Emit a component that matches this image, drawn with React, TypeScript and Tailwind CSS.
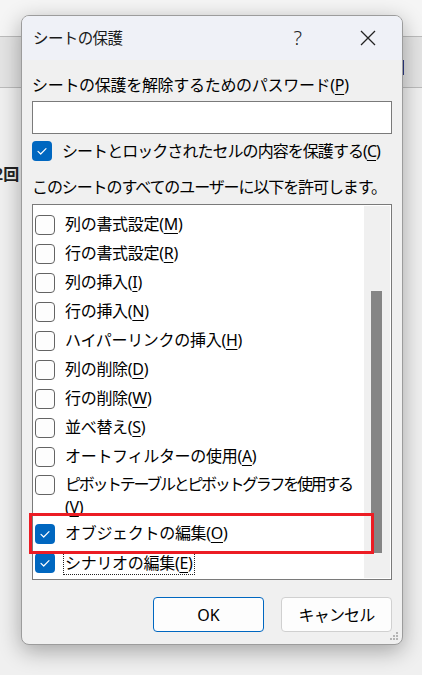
import React from "react";

type Item = { label: string; key: string; checked: boolean; wrap?: boolean; focus?: boolean };

const items: Item[] = [
  { label: "列の書式設定", key: "M", checked: false },
  { label: "行の書式設定", key: "R", checked: false },
  { label: "列の挿入", key: "I", checked: false },
  { label: "行の挿入", key: "N", checked: false },
  { label: "ハイパーリンクの挿入", key: "H", checked: false },
  { label: "列の削除", key: "D", checked: false },
  { label: "行の削除", key: "W", checked: false },
  { label: "並べ替え", key: "S", checked: false },
  { label: "オートフィルターの使用", key: "A", checked: false },
  { label: "ピボットテーブルとピボットグラフを使用する", key: "V", checked: false, wrap: true },
  { label: "オブジェクトの編集", key: "O", checked: true },
  { label: "シナリオの編集", key: "E", checked: true, focus: true },
];

const CheckBox = ({ checked }: { checked: boolean }) =>
  checked ? (
    <div className="w-[20px] h-[20px] shrink-0 rounded-[4px] bg-[#0067c0] flex items-center justify-center">
      <svg width="20" height="20" viewBox="0 0 20 20" fill="none">
        <path d="M6 10.3 L8.7 13 L14 7.6" stroke="white" strokeWidth="1.2" strokeLinecap="round" strokeLinejoin="round" />
      </svg>
    </div>
  ) : (
    <div className="w-[20px] h-[20px] shrink-0 rounded-[4px] border border-[#646464] bg-[#fdfdfd]" />
  );

const Key = ({ k }: { k: string }) => (
  <>
    (<span className="underline underline-offset-[3px] decoration-1">{k}</span>)
  </>
);

export default function App() {
  return (
    <div className="relative w-[422px] h-[675px] overflow-hidden bg-[#f0f0f0] font-['Noto_Sans','Noto_Sans_CJK_JP',sans-serif] text-black">
      {/* sheet behind the dialog */}
      <div className="h-[36px] bg-[#f5f5f5]" />
      <div className="h-[52px] bg-[#e4e4e4] border-y border-[#bcbcbc]" />
      <div className="pt-[75px]">
        <div className="ml-[-6px] text-[16px] leading-[22px] font-semibold text-[#222] whitespace-nowrap">2回</div>
      </div>
      <div className="absolute left-[402px] top-[60px] w-[2px] h-[15px] bg-[#2f3c86]" />

      {/* dialog */}
      <div className="absolute left-[21px] top-[15px] w-[382px] h-[630px] rounded-[8px] border border-[#9c9c9c] bg-[#f0f0f0] shadow-[0_6px_22px_rgba(0,0,0,0.32)] flex flex-col overflow-hidden">
        <div className="h-[44px] shrink-0 bg-[#eff1f7] flex items-center pl-[11px] pr-[26px]">
          <span className="text-[15.5px] text-[#1b1b1b] tracking-[-0.6px] mt-[1px]">シートの保護</span>
          <span className="ml-auto mr-[58px] text-[20px] font-light text-[#222] leading-none">?</span>
          <svg width="16" height="16" viewBox="0 0 16 16">
            <path d="M1 1 L15 15 M15 1 L1 15" stroke="#222" strokeWidth="1.3" />
          </svg>
        </div>

        <div className="flex-1 px-[10px] flex flex-col">
          <div className="mt-[13px] text-[16px] leading-[24px] tracking-[-0.3px] whitespace-nowrap">
            シートの保護を解除するためのパスワード<Key k="P" />
          </div>
          <div className="mt-[4px] h-[33px] w-[360px] bg-white border border-[#7a7a7a]" />

          <div className="mt-[5px] h-[24px] flex items-center">
            <CheckBox checked />
            <span className="ml-[10px] text-[16px] leading-[24px] tracking-[-0.95px] whitespace-nowrap">
              シートとロックされたセルの内容を保護する<Key k="C" />
            </span>
          </div>

          <div className="mt-[12px] text-[16px] leading-[24px] tracking-[-1.1px] whitespace-nowrap">
            このシートのすべてのユーザーに以下を許可します。
          </div>

          <div className="relative mt-[5px] h-[376px] w-[360px] bg-white border border-[#7a7a7a] flex">
            <div className="flex-1 pt-[5px] pl-[2px]">
              {items.map((it) =>
                it.wrap ? (
                  <div key={it.key} className="h-[48px] flex items-start pt-[2px]">
                    <div className="h-[23px] flex items-center">
                      <CheckBox checked={it.checked} />
                    </div>
                    <span className="ml-[10px] text-[16px] leading-[23px] whitespace-nowrap">
                      <span className="tracking-[-2.3px]">{it.label}</span>
                      <br />
                      <span className="tracking-[-0.3px]">
                        <Key k={it.key} />
                      </span>
                    </span>
                  </div>
                ) : (
                  <div key={it.key} className="h-[29px] flex items-center">
                    <CheckBox checked={it.checked} />
                    <span
                      className={
                        it.focus
                          ? "ml-[8px] px-[1px] border border-dotted border-[#222] text-[16px] leading-[22px] tracking-[-0.3px] whitespace-nowrap"
                          : "ml-[10px] text-[16px] leading-[23px] tracking-[-0.3px] whitespace-nowrap"
                      }
                    >
                      {it.label}
                      <Key k={it.key} />
                    </span>
                  </div>
                )
              )}
            </div>
            <div className="w-[26px] my-[1px] mr-[1px] bg-[#f0f0f0] pt-[85px] pl-[7px]">
              <div className="w-[11px] h-[262px] bg-[#858585]" />
            </div>
            {/* highlight annotation */}
            <div className="absolute left-[-4px] top-[308px] w-[345px] h-[41px] border-[3px] border-[#ec1c24]" />
          </div>

          <div className="mt-[17px] flex justify-end gap-[17px]">
            <button className="w-[111px] h-[35px] rounded-[4px] border border-[#0067c0] bg-[#fdfdfd] text-[16px]">
              OK
            </button>
            <button className="w-[111px] h-[35px] rounded-[4px] border border-[#d0d0d0] bg-[#fdfdfd] text-[16px] tracking-[-0.8px]">
              キャンセル
            </button>
          </div>
        </div>

        {/* size grip */}
        <svg width="12" height="12" viewBox="0 0 12 12" className="absolute right-[2px] bottom-[2px]">
          <rect x="8" y="2" width="2" height="2" fill="#b5b5b5" />
          <rect x="5" y="5" width="2" height="2" fill="#b5b5b5" />
          <rect x="8" y="5" width="2" height="2" fill="#b5b5b5" />
          <rect x="2" y="8" width="2" height="2" fill="#b5b5b5" />
          <rect x="5" y="8" width="2" height="2" fill="#b5b5b5" />
          <rect x="8" y="8" width="2" height="2" fill="#b5b5b5" />
        </svg>
      </div>
    </div>
  );
}
